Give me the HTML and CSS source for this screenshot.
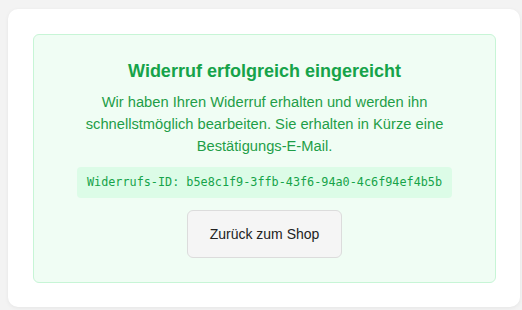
FILE: index.html
```html
<!DOCTYPE html>
<html lang="de">
<head>
<meta charset="utf-8">
<link rel="stylesheet" href="styles.css">
</head>
<body>
<div class="card">
  <div class="success">
    <h2 class="title">Widerruf erfolgreich eingereicht</h2>
    <p class="text">Wir haben Ihren Widerruf erhalten und werden ihn schnellstmöglich bearbeiten. Sie erhalten in Kürze eine Bestätigungs-E-Mail.</p>
    <div class="id">Widerrufs-ID: b5e8c1f9-3ffb-43f6-94a0-4c6f94ef4b5b</div>
    <button class="btn">Zurück zum Shop</button>
  </div>
</div>
</body>
</html>
```

FILE: styles.css
```css
html, body {
  margin: 0;
  padding: 0;
}
body {
  background: #f3f3f3;
  font-family: "Liberation Sans", Arial, sans-serif;
  padding: 9px 0 0 8px;
  height: 310px;
  box-sizing: border-box;
  overflow: hidden;
}
.card {
  width: 512px;
  box-sizing: border-box;
  background: #fff;
  border-radius: 10px;
  box-shadow: 0 1px 4px rgba(0,0,0,0.06);
  padding: 25px 24px 24px 25px;
}
.success {
  width: 463px;
  box-sizing: border-box;
  background: #f0fdf4;
  border: 1px solid #c7f5d6;
  border-radius: 6px;
  padding: 24px 24px 24px;
  display: flex;
  flex-direction: column;
  align-items: center;
  text-align: center;
}
.title {
  margin: 0 0 8px;
  font-size: 18px;
  line-height: 24px;
  font-weight: 700;
  color: #16a34a;
}
.text {
  margin: 0 0 10px;
  font-size: 14.7px;
  line-height: 22px;
  color: #1f9d48;
  padding: 0 10px;
}
.id {
  background: #dcfce7;
  color: #16a34a;
  font-family: "DejaVu Sans Mono", "Liberation Mono", monospace;
  font-size: 11.8px;
  line-height: 15px;
  padding: 8px 10px;
  border-radius: 4px;
}
.btn {
  margin-top: 12px;
  font-family: "Liberation Sans", Arial, sans-serif;
  font-size: 14px;
  color: #222;
  background: #f5f5f5;
  border: 1px solid #dcdcdc;
  border-radius: 6px;
  padding: 14px 22px;
  line-height: 18px;
}
```
